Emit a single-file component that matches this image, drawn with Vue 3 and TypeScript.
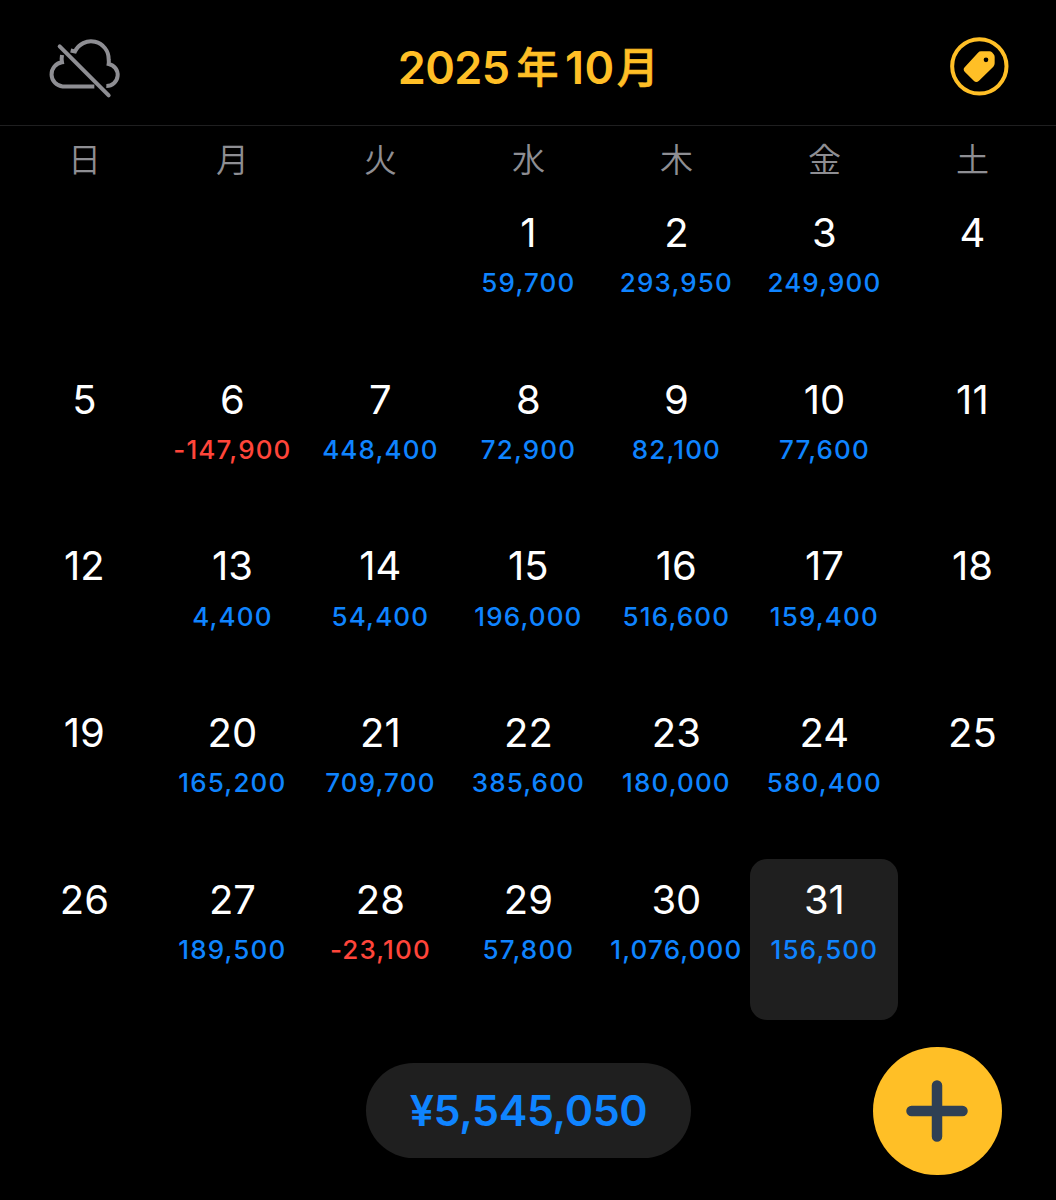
<script setup lang="ts">
interface Day {
  date: number
  amount?: number
  selected?: boolean
}

const weekdays: string[] = ['日', '月', '火', '水', '木', '金', '土']

const amounts: Record<number, number> = {
  1: 59700, 2: 293950, 3: 249900,
  6: -147900, 7: 448400, 8: 72900, 9: 82100, 10: 77600,
  13: 4400, 14: 54400, 15: 196000, 16: 516600, 17: 159400,
  20: 165200, 21: 709700, 22: 385600, 23: 180000, 24: 580400,
  27: 189500, 28: -23100, 29: 57800, 30: 1076000, 31: 156500,
}

const leadingBlanks = 3
const selectedDate = 31

const days: Day[] = Array.from({ length: 31 }, (_, i) => ({
  date: i + 1,
  amount: amounts[i + 1],
  selected: i + 1 === selectedDate,
}))

const total: number = Object.values(amounts).reduce((sum, n) => sum + n, 0)

const format = (n: number): string => n.toLocaleString('en-US')
</script>

<template>
  <div class="screen">
    <header class="header">
      <svg class="cloud" viewBox="0 0 330 300" fill="none" stroke="#8e8e93" stroke-width="12">
        <path d="M96 105Q94 116 96 127A36.500 36.500 0 0 0 98 199.500H193" />
        <path d="M122 91.500L135 94.500A53 53 0 0 1 236 118Q237 126 236 132A33.300 33.300 0 0 1 229 198" />
        <path d="M89 79L236 226" stroke-linecap="round" />
      </svg>
      <h1 class="title"><span>2025</span><span class="kanji year">年</span><span class="num">10</span><span class="kanji month">月</span></h1>
      <svg class="tag" viewBox="0 0 180 180">
        <circle cx="88" cy="88" r="81.500" fill="none" stroke="#ffbf26" stroke-width="12" />
        <path
          fill="#ffbf26"
          fill-rule="evenodd"
          d="M93 43H118Q123 43 126 46L131 52Q134 55 134 60V79Q134 85 130 89L87 131Q79 139 72 132L44 104Q38 97 44 91L84 47Q88 43 93 43ZM108 61.500A7 7 0 1 0 108 75.500A7 7 0 1 0 108 61.500Z"
        />
      </svg>
    </header>

    <div class="weekdays">
      <span v-for="w in weekdays" :key="w">{{ w }}</span>
    </div>

    <main class="grid">
      <div v-for="n in leadingBlanks" :key="'blank' + n" class="cell"></div>
      <div v-for="d in days" :key="d.date" class="cell" :class="{ selected: d.selected }">
        <span class="date">{{ d.date }}</span>
        <span v-if="d.amount !== undefined" class="amount" :class="{ loss: d.amount < 0 }">{{ format(d.amount) }}</span>
      </div>
    </main>

    <footer class="footer">
      <div class="total">¥{{ format(total) }}</div>
      <button class="add" type="button" aria-label="追加">
        <svg viewBox="0 0 62 62" stroke="#2f4054" stroke-width="10.500" stroke-linecap="round">
          <path d="M31 5.500V56.500M5.500 31H56.500" />
        </svg>
      </button>
    </footer>
  </div>
</template>

<style>
body {
  background: #000;
}
</style>

<style scoped>
.screen {
  box-sizing: border-box;
  width: 1056px;
  height: 1200px;
  overflow: hidden;
  display: flex;
  flex-direction: column;
  background: #000;
  font-family: Inter, "Noto Sans CJK JP", sans-serif;
}
.header {
  box-sizing: border-box;
  height: 126px;
  flex: none;
  display: flex;
  justify-content: space-between;
  align-items: flex-start;
  padding: 20px 46px 0 30px;
  border-bottom: 1.500px solid #1f1f20;
}
.cloud {
  width: 110px;
  height: 100px;
}
.tag {
  width: 60px;
  height: 60px;
  margin-top: 17px;
}
.title {
  display: flex;
  align-items: baseline;
  margin: 17px 0 0 -34px;
  color: #ffbf26;
  font-size: 45px;
  line-height: 58px;
  font-weight: 580;
  letter-spacing: -0.600px;
}
.kanji {
  font-family: "Noto Sans CJK JP", sans-serif;
  font-size: 42px;
  font-weight: 500;
  -webkit-text-stroke: 0.700px #ffbf26;
  transform: translateY(-1px);
}
.year {
  margin: 0 7px 0 7px;
}
.num {
  letter-spacing: 0.600px;
}
.month {
  margin-left: 2px;
}
.weekdays {
  height: 66px;
  flex: none;
  display: grid;
  grid-template-columns: repeat(7, 148px);
  padding-left: 10.500px;
  text-align: center;
  color: #8e8e93;
  font-family: "Noto Sans CJK JP", sans-serif;
  font-size: 33px;
  font-weight: 350;
  line-height: 65px;
}
.grid {
  display: grid;
  grid-template-columns: repeat(7, 148px);
  grid-auto-rows: 161px;
  row-gap: 5.700px;
  padding-left: 10.400px;
}
.cell {
  display: flex;
  flex-direction: column;
  align-items: center;
  padding-top: 17px;
  border-radius: 17px;
  box-sizing: border-box;
}
.selected {
  background: #1f1f1f;
}
.date {
  color: #fff;
  font-size: 40px;
  line-height: 48px;
}
.amount {
  margin-top: 10.400px;
  color: #0f84ff;
  font-size: 26px;
  line-height: 32px;
  font-weight: 450;
  letter-spacing: 1.150px;
  white-space: nowrap;
}
.loss {
  color: #ff453a;
}
.footer {
  flex: 1;
  display: flex;
  align-items: flex-start;
  padding: 27.200px 54.400px 0 366px;
  justify-content: space-between;
}
.total {
  box-sizing: border-box;
  width: 325px;
  height: 95px;
  margin-top: 16px;
  border-radius: 48px;
  background: #1f1f1f;
  color: #0f84ff;
  font-size: 43px;
  line-height: 95px;
  font-weight: 570;
  letter-spacing: -0.400px;
  text-align: center;
}
.add {
  display: flex;
  align-items: center;
  justify-content: center;
  width: 128.500px;
  height: 128.500px;
  padding: 0;
  border: 0;
  border-radius: 50%;
  background: #ffbf26;
}
.add svg {
  width: 62px;
  height: 62px;
}
</style>
